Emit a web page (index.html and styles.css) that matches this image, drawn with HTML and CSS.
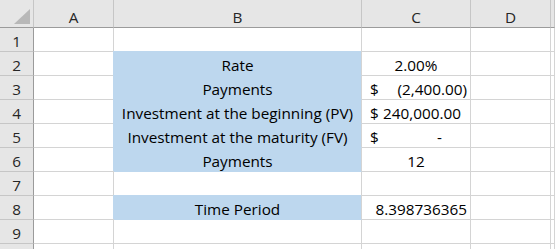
FILE: index.html
```html
<!DOCTYPE html>
<html>
<head>
<meta charset="utf-8">
<link rel="stylesheet" href="styles.css">
</head>
<body>
<div class="sheet">
  <div class="corner"><span class="tri"></span></div>
  <div class="ch">A</div><div class="ch">B</div><div class="ch">C</div><div class="ch">D</div><div class="ch last"></div>

  <div class="rh">1</div><div class="c"></div><div class="c"></div><div class="c"></div><div class="c"></div><div class="c"></div>

  <div class="rh">2</div><div class="c"></div><div class="c fill center">Rate</div><div class="c center">2.00%</div><div class="c"></div><div class="c"></div>

  <div class="rh">3</div><div class="c"></div><div class="c fill center">Payments</div><div class="c acct"><span>$</span><span class="neg">(2,400.00)</span></div><div class="c"></div><div class="c"></div>

  <div class="rh">4</div><div class="c"></div><div class="c fill center">Investment at the beginning (PV)</div><div class="c acct"><span>$</span><span class="pos">240,000.00</span></div><div class="c"></div><div class="c"></div>

  <div class="rh">5</div><div class="c"></div><div class="c fill center">Investment at the maturity (FV)</div><div class="c acct"><span>$</span><span class="zero">-</span></div><div class="c"></div><div class="c"></div>

  <div class="rh">6</div><div class="c"></div><div class="c fill center">Payments</div><div class="c center">12</div><div class="c"></div><div class="c"></div>

  <div class="rh">7</div><div class="c"></div><div class="c"></div><div class="c"></div><div class="c"></div><div class="c"></div>

  <div class="rh">8</div><div class="c"></div><div class="c fill center">Time Period</div><div class="c right">8.398736365</div><div class="c"></div><div class="c"></div>

  <div class="rh">9</div><div class="c"></div><div class="c"></div><div class="c"></div><div class="c"></div><div class="c"></div>

  <div class="rh"></div><div class="c"></div><div class="c"></div><div class="c"></div><div class="c"></div><div class="c"></div>
</div>
</body>
</html>
```
FILE: styles.css
```css
html, body {
  margin: 0;
  padding: 0;
  background: #ffffff;
  overflow: hidden;
}
.sheet {
  display: grid;
  grid-template-columns: 34px 80px 248px 109px 80px 1fr;
  grid-template-rows: 28px repeat(10, 24px);
  width: 555px;
  height: 249px;
  overflow: hidden;
  font-family: "Open Sans", "Liberation Sans", Arial, sans-serif;
  font-size: 15.3px;
  color: #000000;
}
.sheet > div {
  box-sizing: border-box;
  border-right: 1px solid #d4d4d4;
  border-bottom: 1px solid #d4d4d4;
  display: flex;
  align-items: flex-end;
  padding-bottom: 0;
  white-space: nowrap;
  line-height: 20px;
}
.corner {
  background: #e6e6e6;
  border-right-color: #c6c6c6 !important;
  border-bottom-color: #9b9b9b !important;
  position: relative;
}
.tri {
  position: absolute;
  left: 14px;
  top: 9px;
  width: 16px;
  height: 15px;
  background: #b8b8b8;
  clip-path: polygon(100% 0, 100% 100%, 0 100%);
}
.ch {
  background: #e6e6e6;
  border-right-color: #c6c6c6 !important;
  border-bottom-color: #9b9b9b !important;
  justify-content: center;
  color: #262626;
}
.rh {
  background: #e6e6e6;
  border-right-color: #9b9b9b !important;
  border-bottom-color: #c6c6c6 !important;
  justify-content: center;
  color: #262626;
}
.center { justify-content: center; }
.right { justify-content: flex-end; padding-right: 3px; }
.fill {
  background: #bdd7ee;
  border-bottom-color: #bdd7ee !important;
  box-shadow: -1px -1px 0 #bdd7ee;
}
.acct {
  justify-content: space-between;
  padding-left: 8px;
  padding-right: 3px;
}
.pos { padding-right: 6px; }
.zero { padding-right: 25px; }
```
